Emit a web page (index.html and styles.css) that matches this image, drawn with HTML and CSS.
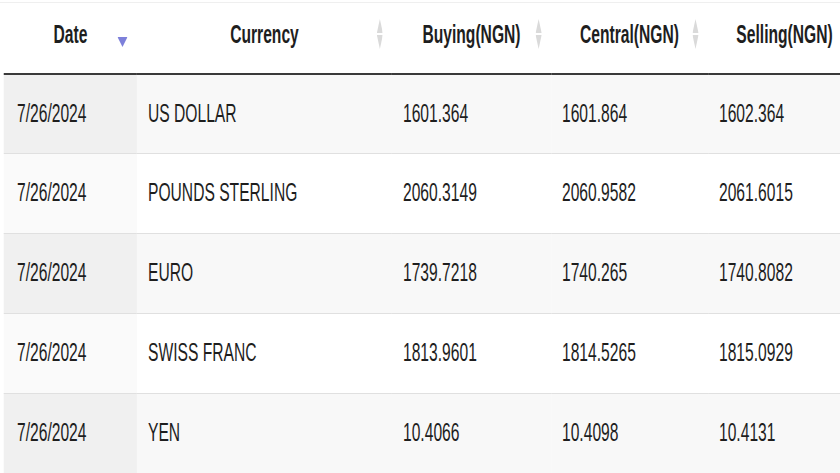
FILE: index.html
```html
<!DOCTYPE html>
<html lang="en">
<head>
<meta charset="utf-8">
<title>Exchange Rates</title>
<link rel="stylesheet" href="styles.css">
</head>
<body>
<div class="frame">
  <div class="squeeze">
    <table class="rates">
      <colgroup>
        <col class="c-date"><col class="c-cur"><col class="c-buy"><col class="c-cen"><col class="c-sel">
      </colgroup>
      <thead>
        <tr>
          <th>Date<svg class="sort desc" viewBox="0 0 10 10" preserveAspectRatio="none"><polygon points="0,0 10,0 5,10"/></svg></th>
          <th>Currency<svg class="sort both" viewBox="0 0 10 30" preserveAspectRatio="none"><polygon points="5,0 10,14 0,14"/><polygon points="0,16 10,16 5,30"/></svg></th>
          <th>Buying(NGN)<svg class="sort both" viewBox="0 0 10 30" preserveAspectRatio="none"><polygon points="5,0 10,14 0,14"/><polygon points="0,16 10,16 5,30"/></svg></th>
          <th>Central(NGN)<svg class="sort both" viewBox="0 0 10 30" preserveAspectRatio="none"><polygon points="5,0 10,14 0,14"/><polygon points="0,16 10,16 5,30"/></svg></th>
          <th>Selling(NGN)<svg class="sort both" viewBox="0 0 10 30" preserveAspectRatio="none"><polygon points="5,0 10,14 0,14"/><polygon points="0,16 10,16 5,30"/></svg></th>
        </tr>
      </thead>
      <tbody>
        <tr class="odd"><td class="sorted">7/26/2024</td><td>US DOLLAR</td><td>1601.364</td><td>1601.864</td><td>1602.364</td></tr>
        <tr class="even"><td class="sorted">7/26/2024</td><td>POUNDS STERLING</td><td>2060.3149</td><td>2060.9582</td><td>2061.6015</td></tr>
        <tr class="odd"><td class="sorted">7/26/2024</td><td>EURO</td><td>1739.7218</td><td>1740.265</td><td>1740.8082</td></tr>
        <tr class="even"><td class="sorted">7/26/2024</td><td>SWISS FRANC</td><td>1813.9601</td><td>1814.5265</td><td>1815.0929</td></tr>
        <tr class="odd"><td class="sorted">7/26/2024</td><td>YEN</td><td>10.4066</td><td>10.4098</td><td>10.4131</td></tr>
      </tbody>
    </table>
  </div>
</div>
</body>
</html>
```

FILE: styles.css
```css
html, body {
  margin: 0;
  padding: 0;
  background: #fff;
  overflow: hidden;
}
.frame {
  width: 840px;
  height: 473px;
  overflow: hidden;
  padding-top: 2px;
  box-sizing: border-box;
}
.squeeze {
  width: 1400px;
  border-top: 1px solid #efefef;
  transform: scaleX(0.625);
  transform-origin: 0 0;
  padding-left: 6.4px;
}
.rates {
  border-collapse: collapse;
  table-layout: fixed;
  font-family: "Liberation Sans", Arial, sans-serif;
  font-size: 25px;
  color: #1e1e1e;
}
.c-date { width: 212.8px; }
.c-cur { width: 408px; }
.c-buy { width: 254.4px; }
.c-cen { width: 251.2px; }
.c-sel { width: 245px; }

.rates th {
  position: relative;
  height: 62px;
  padding: 0 0 8px 0;
  text-align: center;
  vertical-align: middle;
  font-weight: bold;
  white-space: nowrap;
  border-bottom: 2px solid #3a3a3a;
  line-height: 28px;
}
.sort {
  position: absolute;
  right: 15px;
}
.sort.both {
  width: 9.6px;
  height: 30px;
  top: 16px;
  fill: #dadada;
}
.sort.desc {
  width: 16px;
  height: 10px;
  top: 34px;
  fill: #7d80da;
}
.rates td {
  height: 79px;
  padding: 0 0 2px 17.6px;
  box-sizing: border-box;
  vertical-align: middle;
  white-space: nowrap;
  line-height: 28px;
}
.rates tbody tr + tr td {
  border-top: 1px solid #e0e0e0;
  height: 80px;
}
.rates td.sorted {
  padding-left: 20.8px;
}
.rates tr.odd td { background: #f8f8f8; }
.rates tr.odd td.sorted { background: #f0f0f0; }
.rates tr.even td { background: #ffffff; }
.rates tr.even td.sorted { background: #fafafa; }
```
